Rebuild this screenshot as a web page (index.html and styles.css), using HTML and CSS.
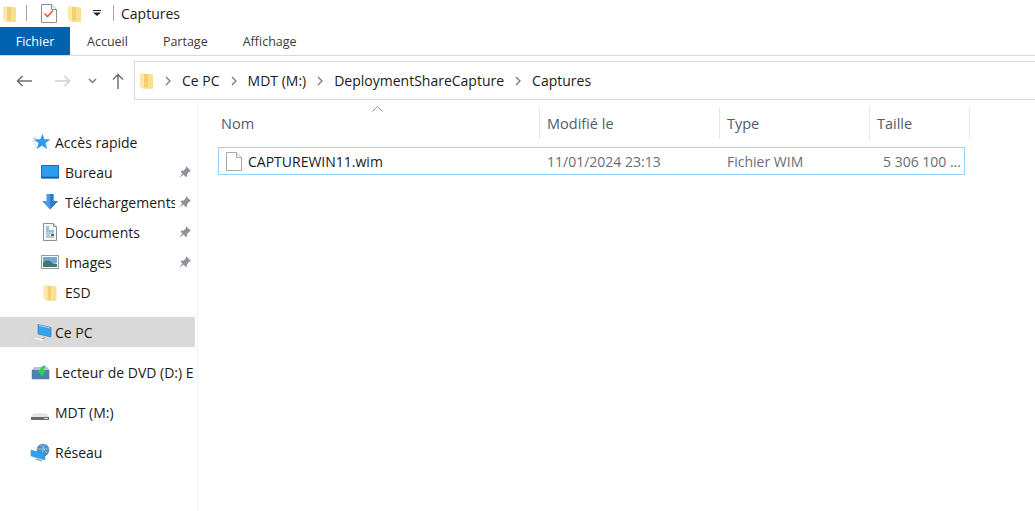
FILE: index.html
```html
<!DOCTYPE html>
<html lang="fr">
<head>
<meta charset="utf-8">
<title>Captures</title>
<link rel="stylesheet" href="styles.css">
</head>
<body>
<svg class="defs" width="0" height="0">
  <defs>
    <symbol id="folder" viewBox="0 0 13 17">
      <path d="M0 1l4 .5V16l-4-1z" fill="#fde8a8"/>
      <path d="M4 1.500 8 2v13.500H4z" fill="#f4cf6f"/>
      <path d="M8 2l5 .5V15.500H8z" fill="#fadf8e"/>
      <path d="M3 15.500h10V16.500H3z" fill="#f0c860"/>
    </symbol>
    <symbol id="pin" viewBox="0 0 14 14">
      <path d="M8 1l5 5-1.500 .6-2.300 2.300-.3 2.600-1 .5L2.600 6.700l.5-1 2.600-.3L8 3.100z" fill="#8c939b"/>
      <path d="M4.500 8.300 1 13l4.700-3.500z" fill="#8c939b"/>
    </symbol>
  </defs>
</svg>

<header class="titlebar">
  <svg class="folder-qa" width="13" height="17"><use href="#folder"/></svg>
  <span class="sep sep-a"></span>
  <svg class="qa-check" width="16" height="19" viewBox="0 0 16 19">
    <path d="M.5.500h10l5 5v13H.5z" fill="#fff" stroke="#8f8f8f"/>
    <path d="M10.500.500v5h5" fill="#f2f2f2" stroke="#8f8f8f"/>
    <path d="M3.500 9.500l3 3 5.500-6" fill="none" stroke="#e2622b" stroke-width="1.600"/>
  </svg>
  <svg class="folder-qb" width="13" height="17"><use href="#folder"/></svg>
  <svg class="qa-down" width="8" height="6" viewBox="0 0 8 6">
    <path d="M0 0h8v1H0z" fill="#222"/><path d="M0 2.500h8L4 6z" fill="#222"/>
  </svg>
  <span class="sep sep-b"></span>
  <span class="title-text">Captures</span>
</header>

<nav class="tabs">
  <span class="tab tab-file">Fichier</span>
  <span class="tab tab-home">Accueil</span>
  <span class="tab tab-share">Partage</span>
  <span class="tab tab-view">Affichage</span>
</nav>

<section class="addressbar">
  <svg class="nav-back" width="16" height="12" viewBox="0 0 16 12"><path d="M6.500 1 1.500 6l5 5M1.500 6H16" fill="none" stroke="#707070" stroke-width="1.500"/></svg>
  <svg class="nav-forward" width="16" height="12" viewBox="0 0 16 12"><path d="M9.500 1l5 5-5 5M14.500 6H0" fill="none" stroke="#cfcfcf" stroke-width="1.500"/></svg>
  <svg class="nav-recent" width="9" height="6" viewBox="0 0 9 6"><path d="M1 1l3.500 3.500L8 1" fill="none" stroke="#7c7c7c" stroke-width="1.500"/></svg>
  <svg class="nav-up" width="12" height="16" viewBox="0 0 12 16"><path d="M1 6.500l5-5 5 5M6 1.500V16" fill="none" stroke="#707070" stroke-width="1.500"/></svg>
  <div class="crumbs">
    <svg class="crumb-folder" width="13" height="17"><use href="#folder"/></svg>
    <svg class="chev" width="6" height="10" viewBox="0 0 6 10"><path d="M1 1l4 4-4 4" fill="none" stroke="#7a7a7a" stroke-width="1.300"/></svg>
    <span>Ce PC</span>
    <svg class="chev" width="6" height="10" viewBox="0 0 6 10"><path d="M1 1l4 4-4 4" fill="none" stroke="#7a7a7a" stroke-width="1.300"/></svg>
    <span>MDT (M:)</span>
    <svg class="chev" width="6" height="10" viewBox="0 0 6 10"><path d="M1 1l4 4-4 4" fill="none" stroke="#7a7a7a" stroke-width="1.300"/></svg>
    <span>DeploymentShareCapture</span>
    <svg class="chev" width="6" height="10" viewBox="0 0 6 10"><path d="M1 1l4 4-4 4" fill="none" stroke="#7a7a7a" stroke-width="1.300"/></svg>
    <span>Captures</span>
  </div>
</section>

<main class="main">
  <aside class="sidebar">
    <div class="group group-quick">
      <div class="row row-top">
        <svg class="ico-top" width="22" height="20" viewBox="0 0 22 20">
          <path d="M12.500 2.500l1.500 5 5.500.2-4.400 3.300 1.600 5.500-4.700-3.200-4.700 3.200 1.600-5.500L4.500 7.700l6-.2z" fill="#2b9cf0" stroke="#1c84d6" stroke-width=".5"/>
          <path d="M3 6h4M2 9h4M3 12h3M5 15h2" stroke="#a9d3f2" stroke-width="1"/>
        </svg>
        <span class="label">Accès rapide</span>
      </div>
      <div class="row row-sub">
        <svg class="ico" width="18" height="14" viewBox="0 0 18 14"><rect x=".5" y=".5" width="17" height="12.500" fill="#2b9cf0" stroke="#1a6fb5"/><path d="M1 12.500h16" stroke="#0b5d9e" stroke-width="1.500"/></svg>
        <span class="label label-narrow">Bureau</span>
        <svg class="pin" width="14" height="14"><use href="#pin"/></svg>
      </div>
      <div class="row row-sub">
        <svg class="ico" width="18" height="18" viewBox="0 0 18 18"><path d="M5.500 1h7v7H17L9 16.500 1 8h4.500z" fill="#4a9ae8"/><path d="M9 1h3.500v7H17L9 16.500z" fill="#2f7bcc"/></svg>
        <span class="label label-narrow">Téléchargements</span>
        <svg class="pin" width="14" height="14"><use href="#pin"/></svg>
      </div>
      <div class="row row-sub">
        <svg class="ico" width="18" height="18" viewBox="0 0 18 18"><path d="M2.500.5h10l3 3v14h-13z" fill="#f7f8fa" stroke="#8d8d8d"/><path d="M12.500.5v3h3" fill="#e4e4e4" stroke="#8d8d8d"/><path d="M5 4h3M5 6h3M5 8h8" stroke="#2b8fe0"/><path d="M5 10h8M5 12h4M5 14h8" stroke="#8b99a8"/><path d="M10 11h3v2h-3z" fill="#3f7a6b"/></svg>
        <span class="label label-narrow">Documents</span>
        <svg class="pin" width="14" height="14"><use href="#pin"/></svg>
      </div>
      <div class="row row-sub">
        <svg class="ico" width="18" height="14" viewBox="0 0 18 14"><rect x=".5" y=".5" width="17" height="13" fill="#fff" stroke="#9a9a9a"/><rect x="2" y="2" width="14" height="6" fill="#6fa8d8"/><path d="M2 8c3-3 6-3 8-1s4 1 6 2v3H2z" fill="#3f7a6b"/></svg>
        <span class="label label-narrow">Images</span>
        <svg class="pin" width="14" height="14"><use href="#pin"/></svg>
      </div>
      <div class="row row-sub">
        <svg class="ico ico-folder" width="13" height="17"><use href="#folder"/></svg>
        <span class="label label-narrow">ESD</span>
      </div>
    </div>

    <div class="row row-top row-selected">
      <svg class="ico-top" width="22" height="20" viewBox="0 0 22 20">
        <path d="M8 2.500l13 3v9.500L8 12z" fill="#35a2ee" stroke="#3b7fb5" stroke-width=".7"/>
        <path d="M9 3l11 2.500v1L9 4z" fill="#a6dafa"/>
        <path d="M15 15l-1 1.500H11" stroke="#8c8c8c" fill="none"/>
        <path d="M1 16l6-1 9 3-5 1.500z" fill="#efefef" stroke="#c4c4c4" stroke-width=".5"/>
      </svg>
      <span class="label">Ce PC</span>
    </div>

    <div class="row row-top row-drive">
      <svg class="ico-top" width="22" height="20" viewBox="0 0 22 20">
        <rect x="2" y="8" width="17" height="9" fill="#4e7fb8" stroke="#5c6f85" stroke-width=".5"/>
        <path d="M2 8h17l-2-3H4z" fill="#b5c4d2"/>
        <path d="M15 3l-3 1.500c-1.500 1-2 2.500-2 4H7.500l4.500 6 4.500-6h-3c0-1.500.8-2.500 2-3.500z" fill="#33cc55"/>
      </svg>
      <span class="label">Lecteur de DVD (D:) E</span>
    </div>

    <div class="row row-top row-drive">
      <svg class="ico-top" width="22" height="20" viewBox="0 0 22 20">
        <path d="M4 11h12l3 4H1z" fill="#e6e6e6"/>
        <path d="M1 15h18v3H1z" fill="#6b6b6b"/>
        <path d="M14 16h4v1h-4z" fill="#dcdcdc"/>
      </svg>
      <span class="label">MDT (M:)</span>
    </div>

    <div class="row row-top row-drive">
      <svg class="ico-top" width="22" height="20" viewBox="0 0 22 20">
        <circle cx="13" cy="8" r="6.300" fill="#4d8fc7"/>
        <path d="M10 2.500c3 1 4 5 2 9M15 2c-2 3-1 7 2 9M7 7h12" stroke="#a8d0ea" fill="none" stroke-width=".8"/>
        <path d="M1 8l14 4v6L1 14z" fill="#2ba3f0" stroke="#3b7fb5" stroke-width=".5"/>
        <path d="M6 17l6 2" stroke="#8a8a8a" stroke-width="1.200"/>
      </svg>
      <span class="label">Réseau</span>
    </div>
  </aside>

  <section class="content">
    <svg class="sort-caret" width="11" height="6" viewBox="0 0 11 6"><path d="M.5 5.500l5-5 5 5" fill="none" stroke="#9a9a9a"/></svg>
    <div class="columns head">
      <span class="col col-name">Nom</span>
      <span class="col col-date">Modifié le</span>
      <span class="col col-type">Type</span>
      <span class="col col-size">Taille</span>
    </div>
    <div class="file">
      <span class="cell-name">
        <svg class="file-ico" width="16" height="19" viewBox="0 0 16 19"><path d="M.5.500h10l5 5v13H.5z" fill="#fff" stroke="#a8a8a8"/><path d="M10.500.500v5h5" fill="#f0f0f0" stroke="#a8a8a8"/></svg>
        CAPTUREWIN11.wim
      </span>
      <span class="cell cell-date">11/01/2024 23:13</span>
      <span class="cell cell-type">Fichier WIM</span>
      <span class="cell cell-size">5 306 100 ...</span>
    </div>
  </section>
</main>
</body>
</html>
```

FILE: styles.css
```css
* { box-sizing: border-box; }

html, body {
  margin: 0;
  height: 100%;
}

body {
  width: 1035px;
  height: 511px;
  overflow: hidden;
  background: #fff;
  font-family: "Open Sans", "Noto Sans", sans-serif;
  font-size: 14px;
  color: #1a1a1a;
  display: flex;
  flex-direction: column;
}

.defs { position: absolute; }

svg { display: block; flex: none; }

/* title bar */
.titlebar {
  height: 27px;
  display: flex;
  align-items: center;
  flex: none;
  padding: 0 0 1px 3px;
}
.sep { width: 1px; height: 16px; background: #a8a8a8; }
.sep-a { margin-left: 10px; }
.qa-check { margin-left: 14px; }
.folder-qb { margin-left: 11px; }
.qa-down { margin-left: 12px; }
.sep-b { margin-left: 12px; }
.title-text { margin-left: 7px; }

/* tabs */
.tabs {
  height: 29px;
  display: flex;
  flex: none;
  border-bottom: 1px solid #dadada;
  font-size: 12.5px;
  color: #3b3b3b;
}
.tab { display: flex; align-items: center; height: 28px; }
.tab-file {
  width: 70px;
  justify-content: center;
  background: #0063b1;
  color: #fff;
}
.tab-home { margin-left: 17px; }
.tab-share { margin-left: 35px; }
.tab-view { margin-left: 35px; }

/* address bar */
.addressbar {
  height: 44px;
  display: flex;
  align-items: center;
  flex: none;
  padding: 5px 0 0 16px;
}
.nav-forward { margin-left: 23px; }
.nav-recent { margin-left: 17px; }
.nav-up { margin-left: 15px; }
.crumbs {
  margin-left: 10px;
  flex: 1;
  height: 39px;
  display: flex;
  align-items: center;
  gap: 11px;
  padding: 0 0 0 5px;
  border: 1px solid #d9d9d9;
  border-right: 0;
}
.crumb-folder { margin-right: 1px; }

/* main */
.main {
  flex: 1;
  display: flex;
  min-height: 0;
}

.sidebar {
  width: 198px;
  flex: none;
  border-right: 1px solid #f4f4f4;
  padding: 27px 2px 0 0;
  overflow: hidden;
}

.group-quick { margin-bottom: 10px; }

.row {
  height: 30px;
  display: flex;
  align-items: center;
  white-space: nowrap;
  overflow: hidden;
}
.row-top { padding-left: 30px; }
.row-sub { padding-left: 41px; }
.row-selected { background: #d9d9d9; }
.row-drive { margin-top: 10px; }

.ico { width: 18px; margin-right: 6px; }
.ico-top { margin-right: 3px; }
.ico-folder { padding: 0 2px; }

.label { overflow: hidden; white-space: nowrap; flex: none; max-width: 140px; }
.label-narrow { width: 110px; }
.pin { margin-left: 3px; }

/* content */
.content {
  flex: 1;
  position: relative;
  padding: 7px 0 0 20px;
  min-width: 0;
}
.sort-caret { position: absolute; left: 174px; top: 6px; }

.columns {
  display: flex;
  height: 32px;
  color: #4f5b6b;
  font-size: 14.5px;
}
.col {
  display: flex;
  align-items: center;
  padding-left: 7px;
  border-right: 1px solid #e5e5e5;
}
.col-name { width: 322px; padding-left: 3px; }
.col-date { width: 180px; }
.col-type { width: 150px; }
.col-size { width: 100px; }

.file {
  margin-top: 8px;
  width: 747px;
  height: 28px;
  border: 1px solid #99d1ff;
  display: flex;
  align-items: center;
  color: #6d6d6d;
}
.cell-name {
  display: flex;
  align-items: center;
  gap: 6px;
  width: 320px;
  padding-left: 7px;
  color: #1a1a1a;
}
.cell-date { width: 180px; padding-left: 8px; }
.cell-type { width: 150px; padding-left: 8px; }
.cell-size { width: 95px; padding-left: 14px; white-space: nowrap; }
```
